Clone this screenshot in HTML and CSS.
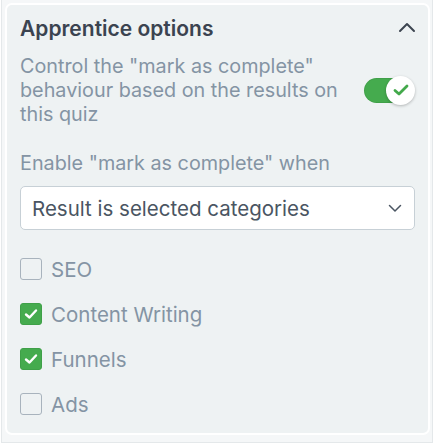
FILE: index.html
```html
<!DOCTYPE html>
<html>
<head>
<meta charset="utf-8">
<link rel="stylesheet" href="styles.css">
</head>
<body>
<div class="frame">
  <section class="panel">
    <header class="panel-head">
      <h2 class="title">Apprentice options</h2>
      <svg class="chev-up" width="18" height="12" viewBox="0 0 18 12"><path d="M2 10 L9 3 L16 10" fill="none" stroke="#3d4550" stroke-width="2" stroke-linecap="round" stroke-linejoin="round"/></svg>
    </header>
    <div class="toggle-row">
      <p class="desc">Control the "mark as complete" behaviour based on the results on this quiz</p>
      <div class="toggle">
        <span class="knob">
          <svg width="16" height="14" viewBox="0 0 16 14"><path d="M2 7.5 L6 11 L14 3" fill="none" stroke="#43a94b" stroke-width="2.8" stroke-linecap="round" stroke-linejoin="round"/></svg>
        </span>
      </div>
    </div>
    <label class="field-label">Enable "mark as complete" when</label>
    <div class="select">
      <span>Result is selected categories</span>
      <svg width="14" height="9" viewBox="0 0 14 9"><path d="M1.5 1.5 L7 7 L12.5 1.5" fill="none" stroke="#4a5562" stroke-width="1.5" stroke-linecap="round" stroke-linejoin="round"/></svg>
    </div>
    <ul class="checks">
      <li class="check"><span class="box"></span><span class="lbl">SEO</span></li>
      <li class="check"><span class="box on"><svg width="14" height="12" viewBox="0 0 14 12"><path d="M2 6.5 L5.5 9.5 L12 2.5" fill="none" stroke="#fff" stroke-width="2.4" stroke-linecap="round" stroke-linejoin="round"/></svg></span><span class="lbl">Content Writing</span></li>
      <li class="check"><span class="box on"><svg width="14" height="12" viewBox="0 0 14 12"><path d="M2 6.5 L5.5 9.5 L12 2.5" fill="none" stroke="#fff" stroke-width="2.4" stroke-linecap="round" stroke-linejoin="round"/></svg></span><span class="lbl">Funnels</span></li>
      <li class="check"><span class="box"></span><span class="lbl">Ads</span></li>
    </ul>
  </section>
</div>
</body>
</html>
```

FILE: styles.css
```css
* { box-sizing: border-box; }
html, body { margin: 0; padding: 0; background: #ffffff; }
body {
  font-family: Inter, "Noto Sans", sans-serif;
  width: 437px;
  height: 443px;
  overflow: hidden;
}
.frame {
  margin-left: 1px;
  width: 432px;
  height: 443px;
  border-left: 1px solid #e4e8ea;
  border-right: 1px solid #e4e8ea;
  border-bottom: 1px solid #e4e8ea;
  padding: 5px 4px 0 5px;
  background: #f5f7f8;
}
.panel {
  background: #eef2f3;
  border-radius: 5px;
  box-shadow: 0 0 0 2px #ffffff;
  padding: 12px 13px 12px 13px;
  height: 428px;
}
.panel-head {
  display: flex;
  align-items: center;
  justify-content: space-between;
  height: 22px;
}
.title {
  margin: 0;
  font-size: 21px;
  font-weight: 600;
  color: #3b4350;
}
.chev-up { margin-right: -1px; margin-top: -2px; }
.toggle-row {
  display: flex;
  align-items: center;
  justify-content: space-between;
  margin-top: 15px;
}
.desc {
  margin: 0;
  width: 335px;
  font-size: 19.8px;
  line-height: 24px;
  color: #8494a4;
}
.toggle {
  flex: none;
  position: relative;
  width: 48px;
  height: 25px;
  border-radius: 13px;
  background: #45ab4e;
  margin-right: 3px;
  box-shadow: inset 0 0 0 1px rgba(0,0,0,0.06);
}
.knob {
  position: absolute;
  right: -3px;
  top: -2px;
  width: 29px;
  height: 29px;
  border-radius: 50%;
  background: #fff;
  box-shadow: 0 1px 3px rgba(0,0,0,0.25);
  display: flex;
  align-items: center;
  justify-content: center;
}
.field-label {
  display: block;
  margin-top: 25px;
  font-size: 19.8px;
  line-height: 24px;
  color: #8494a4;
}
.select {
  margin-top: 11px;
  height: 44px;
  background: #ffffff;
  border: 1px solid #c7d0d6;
  border-radius: 5px;
  display: flex;
  align-items: center;
  justify-content: space-between;
  padding: 0 12px 0 11px;
  font-size: 20.5px;
  color: #4a5562;
}
.checks {
  list-style: none;
  margin: 27px 0 0 0;
  padding: 0;
  display: flex;
  flex-direction: column;
  gap: 21px;
}
.check {
  display: flex;
  align-items: center;
  gap: 9px;
  height: 24px;
}
.box {
  flex: none;
  width: 22px;
  height: 22px;
  border: 1.5px solid #a8b3bd;
  border-radius: 3px;
  display: flex;
  align-items: center;
  justify-content: center;
}
.box.on {
  background: #45ab4e;
  border-color: #3fa048;
}
.lbl {
  font-size: 20.5px;
  color: #8494a4;
}
```
